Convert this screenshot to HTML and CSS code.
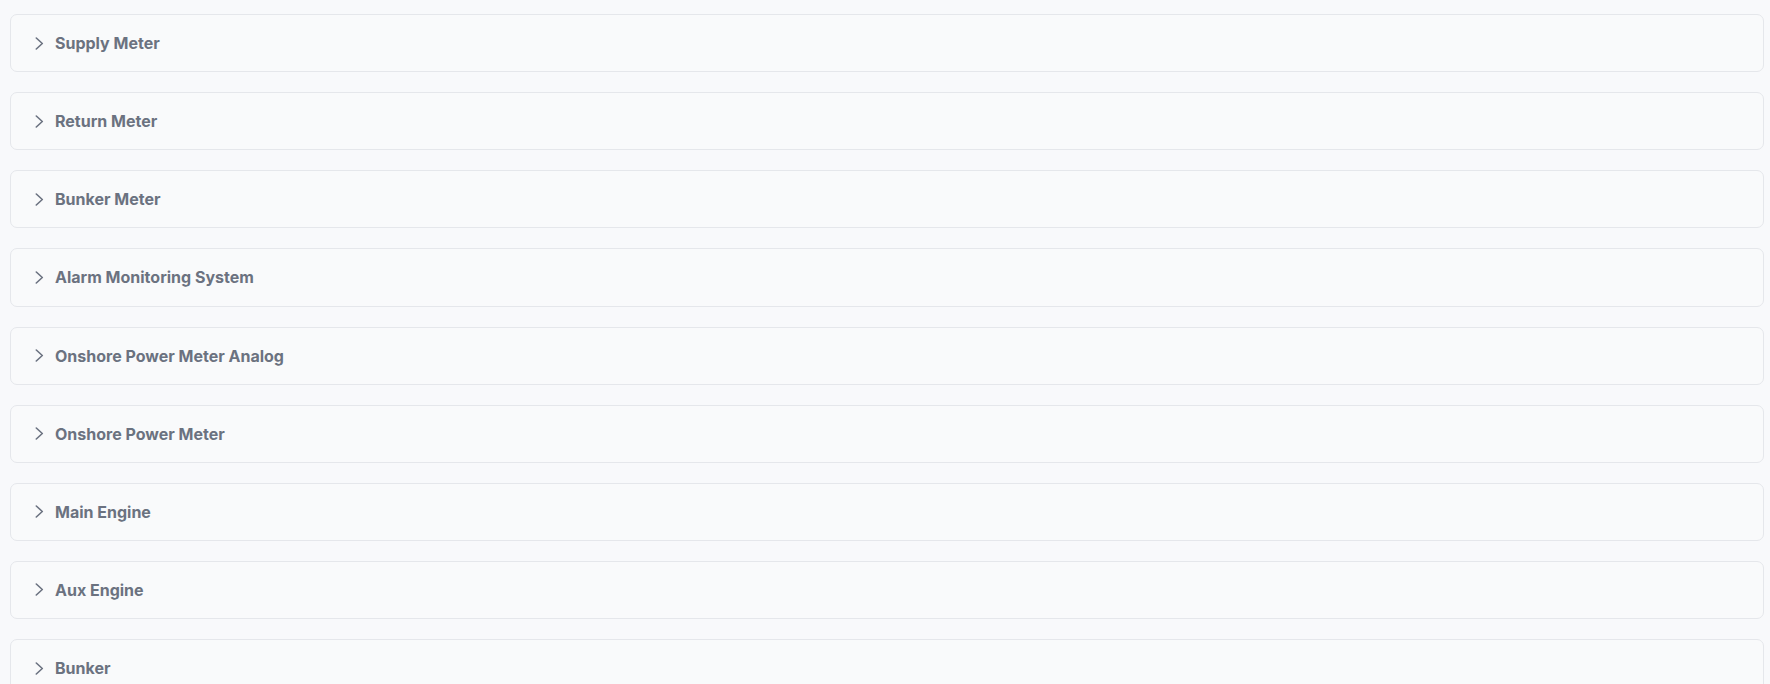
FILE: index.html
```html
<!DOCTYPE html>
<html>
<head>
<meta charset="utf-8">
<link rel="stylesheet" href="styles.css">
</head>
<body>
<div class="list">
  <div class="card"><svg class="chev" viewBox="0 0 9 13"><path d="M1.3 1 L7.3 6.5 L1.3 12"/></svg><span class="title">Supply Meter</span></div>
  <div class="card"><svg class="chev" viewBox="0 0 9 13"><path d="M1.3 1 L7.3 6.5 L1.3 12"/></svg><span class="title">Return Meter</span></div>
  <div class="card"><svg class="chev" viewBox="0 0 9 13"><path d="M1.3 1 L7.3 6.5 L1.3 12"/></svg><span class="title">Bunker Meter</span></div>
  <div class="card"><svg class="chev" viewBox="0 0 9 13"><path d="M1.3 1 L7.3 6.5 L1.3 12"/></svg><span class="title">Alarm Monitoring System</span></div>
  <div class="card"><svg class="chev" viewBox="0 0 9 13"><path d="M1.3 1 L7.3 6.5 L1.3 12"/></svg><span class="title">Onshore Power Meter Analog</span></div>
  <div class="card"><svg class="chev" viewBox="0 0 9 13"><path d="M1.3 1 L7.3 6.5 L1.3 12"/></svg><span class="title">Onshore Power Meter</span></div>
  <div class="card"><svg class="chev" viewBox="0 0 9 13"><path d="M1.3 1 L7.3 6.5 L1.3 12"/></svg><span class="title">Main Engine</span></div>
  <div class="card"><svg class="chev" viewBox="0 0 9 13"><path d="M1.3 1 L7.3 6.5 L1.3 12"/></svg><span class="title">Aux Engine</span></div>
  <div class="card"><svg class="chev" viewBox="0 0 9 13"><path d="M1.3 1 L7.3 6.5 L1.3 12"/></svg><span class="title">Bunker</span></div>
</div>
</body>
</html>
```

FILE: styles.css
```css
html, body {
  margin: 0;
  padding: 0;
  background: #f8f9fb;
  overflow: hidden;
}
body {
  font-family: Inter, "Noto Sans", sans-serif;
}
.list {
  display: flex;
  flex-direction: column;
  gap: 20px;
  padding: 14px 6px 0 10px;
}
.card {
  height: 56.125px;
  border: 1px solid #e5e7eb;
  border-radius: 7px;
  background: #f9fafb;
  display: flex;
  align-items: center;
  padding-left: 24px;
  box-sizing: content-box;
}
.chev {
  width: 9px;
  height: 13px;
  fill: none;
  stroke: #6b7280;
  stroke-width: 1.6;
  stroke-linecap: round;
  stroke-linejoin: round;
  margin-right: 11px;
}
.title {
  font-size: 16px;
  font-weight: 700;
  color: #6b7280;
  letter-spacing: 0;
}
```
